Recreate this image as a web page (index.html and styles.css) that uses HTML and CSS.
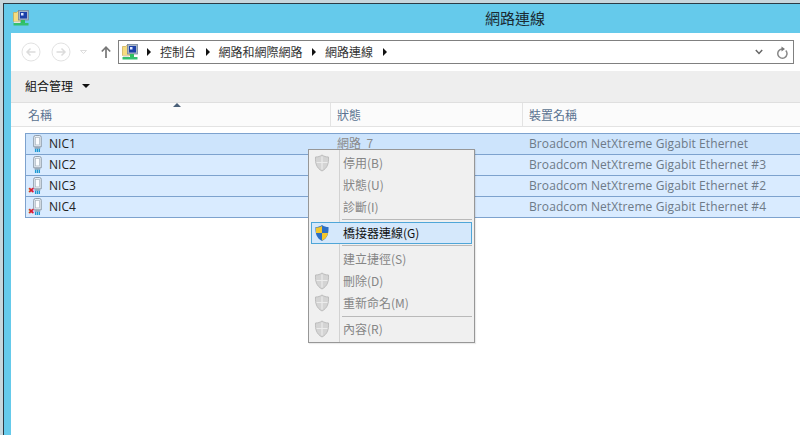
FILE: index.html
```html
<!DOCTYPE html>
<html lang="zh-Hant">
<head>
<meta charset="utf-8">
<title>網路連線</title>
<link rel="stylesheet" href="styles.css">
</head>
<body>
<svg width="0" height="0" class="defs">
  <defs>
    <symbol id="net" viewBox="0 0 16 16">
      <path d="M0.500 2.500h3l1-1h3v10h-7z" fill="#f6dc80" stroke="#c9a94a" stroke-width=".7"/>
      <rect x="5.500" y="0.500" width="10" height="9.500" fill="#a9b6c8" stroke="#76879c" stroke-width=".8"/>
      <rect x="7" y="2" width="7" height="6.500" fill="#1b3fa8"/>
      <rect x="8" y="3" width="2.500" height="2.500" fill="#dfe8ff"/>
      <rect x="8" y="10" width="4" height="3" fill="#2fbf5f"/>
      <rect x="0.500" y="13" width="15" height="2.500" fill="#35c06e"/>
      <rect x="1" y="11.500" width="6" height="1.500" fill="#e4e4e4"/>
    </symbol>
    <symbol id="nic" viewBox="0 0 14 18">
      <path d="M3.500 2.500Q3.500 .5 5.500 .5h4Q11.500 .5 11.500 2.500V12.500H3.500z" fill="#e6edf4" stroke="#8a97a5"/>
      <rect x="5.500" y="2.500" width="4" height="8" fill="#fbfdff" stroke="#a8b3be" stroke-width=".7"/>
      <rect x="4.500" y="13" width="6" height="1.500" fill="#8c9cab"/>
      <path d="M5.500 14.500v3.500M7.500 14.500v3.500M9.500 14.500v3.500" stroke="#1f9ad2" stroke-width="1.400"/>
    </symbol>
    <symbol id="shield-off" viewBox="0 0 16 18">
      <path d="M8 1c2 1.400 4 2 6.500 2 .3 6-.8 11-6.500 14C2.300 14 1.200 9 1.500 3 4 3 6 2.400 8 1z" fill="#d4d4d4" stroke="#bdbdbd"/>
      <path d="M8 2.500V15.500M2.500 8.500h11" stroke="#ececec" stroke-width="1.200"/>
    </symbol>
  </defs>
</svg>
<div class="desktop">
  <div class="window">
    <header class="titlebar">
      <svg class="title-icon"><use href="#net"/></svg>
      <h1 class="title">網路連線</h1>
    </header>
    <div class="client">
      <nav class="addressrow">
        <svg class="round-btn" viewBox="0 0 20 20"><circle cx="10" cy="10" r="9" fill="none" stroke="#e2e2e2"/><path d="M14.500 10H6M9.500 6.500 6 10l3.500 3.500" fill="none" stroke="#dcdcdc" stroke-width="1.500"/></svg>
        <svg class="round-btn round-next" viewBox="0 0 20 20"><circle cx="10" cy="10" r="9" fill="none" stroke="#e2e2e2"/><path d="M5.500 10H14M10.500 6.500 14 10l-3.500 3.500" fill="none" stroke="#dcdcdc" stroke-width="1.500"/></svg>
        <svg class="hist" viewBox="0 0 7 4"><path d="M.5.500h6L3.500 3.500z" fill="none" stroke="#d5d5d5" stroke-width=".8"/></svg>
        <svg class="up" viewBox="0 0 10 12"><path d="M5 12V1.500M.8 5.500 5 1.200l4.200 4.300" fill="none" stroke="#777" stroke-width="1.700"/></svg>
        <div class="addressbox">
          <svg class="addr-icon"><use href="#net"/></svg>
          <span class="crumb-arrow"></span><span class="crumb">控制台</span>
          <span class="crumb-arrow"></span><span class="crumb">網路和網際網路</span>
          <span class="crumb-arrow"></span><span class="crumb">網路連線</span>
          <span class="crumb-arrow"></span>
          <span class="spring"></span>
          <svg class="chev" viewBox="0 0 8 6"><path d="M.8 1 4 4.500 7.200 1" fill="none" stroke="#666" stroke-width="1.500"/></svg>
          <svg class="refresh" viewBox="0 0 12 13"><path d="M9.800 4.500A4.600 4.600 0 1 1 6 3" fill="none" stroke="#888" stroke-width="1.500"/><path d="M5.500 .5v5L9 3z" fill="#777"/></svg>
        </div>
      </nav>
      <div class="toolbar"><span class="tool-label">組合管理</span><span class="tool-caret"></span></div>
      <div class="columns">
        <span class="sort-mark"></span>
        <div class="col col-name">名稱</div>
        <div class="col col-status">狀態</div>
        <div class="col col-device">裝置名稱</div>
      </div>
      <div class="list">
        <div class="row row-focus"><span class="cell-name"><svg class="nic"><use href="#nic"/></svg>NIC1</span><span class="cell-status">網路&nbsp; 7</span><span class="cell-device">Broadcom NetXtreme Gigabit Ethernet</span></div>
        <div class="row"><span class="cell-name"><svg class="nic"><use href="#nic"/></svg>NIC2</span><span class="cell-status"></span><span class="cell-device">Broadcom NetXtreme Gigabit Ethernet #3</span></div>
        <div class="row"><span class="cell-name"><span class="x-badge">✖</span><svg class="nic"><use href="#nic"/></svg>NIC3</span><span class="cell-status"></span><span class="cell-device">Broadcom NetXtreme Gigabit Ethernet #2</span></div>
        <div class="row"><span class="cell-name"><span class="x-badge">✖</span><svg class="nic"><use href="#nic"/></svg>NIC4</span><span class="cell-status"></span><span class="cell-device">Broadcom NetXtreme Gigabit Ethernet #4</span></div>
      </div>
    </div>
  </div>
  <div class="menu">
    <div class="item off"><svg class="shield"><use href="#shield-off"/></svg><span>停用(B)</span></div>
    <div class="item off"><span class="noicon"></span><span>狀態(U)</span></div>
    <div class="item off"><span class="noicon"></span><span>診斷(I)</span></div>
    <div class="sep sep-a"></div>
    <div class="item item-hot">
      <svg class="shield" viewBox="0 0 16 18"><path d="M8 1c2 1.400 4 2 6.500 2 .3 6-.8 11-6.500 14C2.300 14 1.200 9 1.500 3 4 3 6 2.400 8 1z" fill="#2d6fc4"/><path d="M8 2v7H2c-.2-2 0-4 0-5.500C4.500 3.500 6 3 8 2zM8 9h6c-.6 3.500-2.500 6-6 7.500z" fill="#f3c62b"/></svg>
      <span>橋接器連線(G)</span>
    </div>
    <div class="sep sep-b"></div>
    <div class="item off"><span class="noicon"></span><span>建立捷徑(S)</span></div>
    <div class="item off"><svg class="shield"><use href="#shield-off"/></svg><span>刪除(D)</span></div>
    <div class="item off"><svg class="shield"><use href="#shield-off"/></svg><span>重新命名(M)</span></div>
    <div class="sep sep-c"></div>
    <div class="item off"><svg class="shield"><use href="#shield-off"/></svg><span>內容(R)</span></div>
  </div>
</div>
</body>
</html>
```
FILE: styles.css
```css
* { box-sizing: border-box; }
html, body { margin: 0; padding: 0; }
body {
  width: 800px; height: 435px; overflow: hidden; background: #fff;
  font-family: "Noto Sans CJK TC", "Noto Sans", sans-serif;
  font-size: 12px; color: #222;
}
.defs { position: absolute; }
.desktop {
  position: relative; width: 800px; height: 435px;
  background: #c7d6dc; padding: 3px 0 0 3px;
}
.window {
  display: flex; flex-direction: column; height: 432px;
  background: #65caeb; border-top: 1px solid #2b3a44; border-left: 1px solid #2b3a44;
}
.titlebar { position: relative; height: 29px; flex: none; display: flex; align-items: flex-start; padding: 6px 0 0 9px; }
.title-icon { width: 16px; height: 16px; }
.title { position: absolute; left: 0; right: 0; top: 4px; margin: 0; padding-left: 226px; text-align: center; font-size: 15px; line-height: 20px; font-weight: 400; color: #1a2a33; }
.client { flex: 1; margin-left: 7px; background: #fff; display: flex; flex-direction: column; min-height: 0; }
.addressrow { height: 38px; flex: none; display: flex; align-items: center; padding: 0 6px 0 10px; }
.round-btn { width: 20px; height: 20px; flex: none; margin-right: 10px; }
.round-next { margin-right: 9px; }
.hist { width: 7px; height: 4px; margin: 0 14px 0 0; flex: none; }
.up { width: 10px; height: 12px; flex: none; margin-right: 7px; }
.addressbox {
  flex: 1; height: 24px; border: 1px solid #808080; display: flex; align-items: center; padding: 0 5px 0 3px;
}
.addr-icon { width: 16px; height: 16px; flex: none; margin-right: 9px; }
.crumb-arrow { width: 0; height: 0; flex: none; border-left: 4px solid #111; border-top: 4px solid transparent; border-bottom: 4px solid transparent; }
.crumb { margin: 0 9.5px 0 9px; color: #333; line-height: 16px; }
.spring { flex: 1; }
.chev { width: 8px; height: 6px; margin-right: 13px; flex: none; }
.refresh { width: 12px; height: 13px; flex: none; }
.toolbar { height: 32px; flex: none; background: #eeeeee; display: flex; align-items: center; padding: 0 0 2px 14px; border-bottom: 1px solid #dfdfdf; color: #111; }
.tool-label { line-height: 16px; }
.tool-caret { margin-left: 9px; width: 0; height: 0; border-top: 4px solid #111; border-left: 4px solid transparent; border-right: 4px solid transparent; }
.columns { position: relative; height: 24px; flex: none; display: flex; background: #fbfbfb; border-bottom: 1px solid #e3e3e3; color: #5a7391; }
.sort-mark { position: absolute; left: 162px; top: 0; width: 0; height: 0; border-bottom: 4px solid #4a6078; border-left: 4px solid transparent; border-right: 4px solid transparent; }
.col { display: flex; align-items: center; padding-left: 6px; padding-top: 1px; line-height: 16px; border-right: 1px solid #e3e3e3; }
.col-name { width: 320px; padding-left: 17px; }
.col-status { width: 192px; }
.col-device { flex: 1; border-right: 0; }
.list { padding: 6px 0 0 14px; flex: 1; }
.row { height: 22px; margin-bottom: -1px; padding-bottom: 2px; display: flex; align-items: center; background: #d9ebff; border: 1px solid #7da2ce; border-right: 0; }
.row-focus { background: #cde4fc; }
.cell-name { position: relative; width: 311px; flex: none; display: flex; align-items: center; padding-left: 4px; color: #222; font-family: "Open Sans", "Noto Sans", sans-serif; }
.nic { width: 14px; height: 17px; flex: none; margin-right: 5px; }
.x-badge { position: absolute; left: 2px; top: 9px; color: #d8222a; font-size: 8px; line-height: 8px; }
.cell-status { width: 192px; flex: none; color: #8a8a8a; line-height: 16px; }
.cell-device { color: #6d7a88; font-family: "Open Sans", "Noto Sans", sans-serif; white-space: nowrap; letter-spacing: .09px; }
.menu {
  position: absolute; left: 308px; top: 149px; width: 167px; height: 194px;
  background: linear-gradient(to right, #f0f0f0 30px, #d2d2d2 30px, #d2d2d2 31px, #f0f0f0 31px);
  border: 1px solid #979797; padding: 2px; box-shadow: 1px 1px 1px rgba(0,0,0,.08);
}
.item { height: 22px; display: flex; align-items: center; line-height: 16px; }
.off { color: #858585; }
.shield { width: 16px; height: 18px; flex: none; margin: 0 5px 0 3px; }
.noicon { width: 16px; margin: 0 5px 0 3px; flex: none; }
.item span:last-child { margin-left: 8px; }
.item-hot { color: #111; background: #d5e8fb; border: 1px solid #4fa6d8; }
.item-hot .shield { margin-left: 2px; }
.sep { height: 1px; margin-left: 31px; background: #b9b9b9; }
.sep-a { margin-top: 1px; margin-bottom: 2px; }
.sep-b { margin-top: 1px; margin-bottom: 2px; }
.sep-c { margin-top: 2px; margin-bottom: 1px; }
```
